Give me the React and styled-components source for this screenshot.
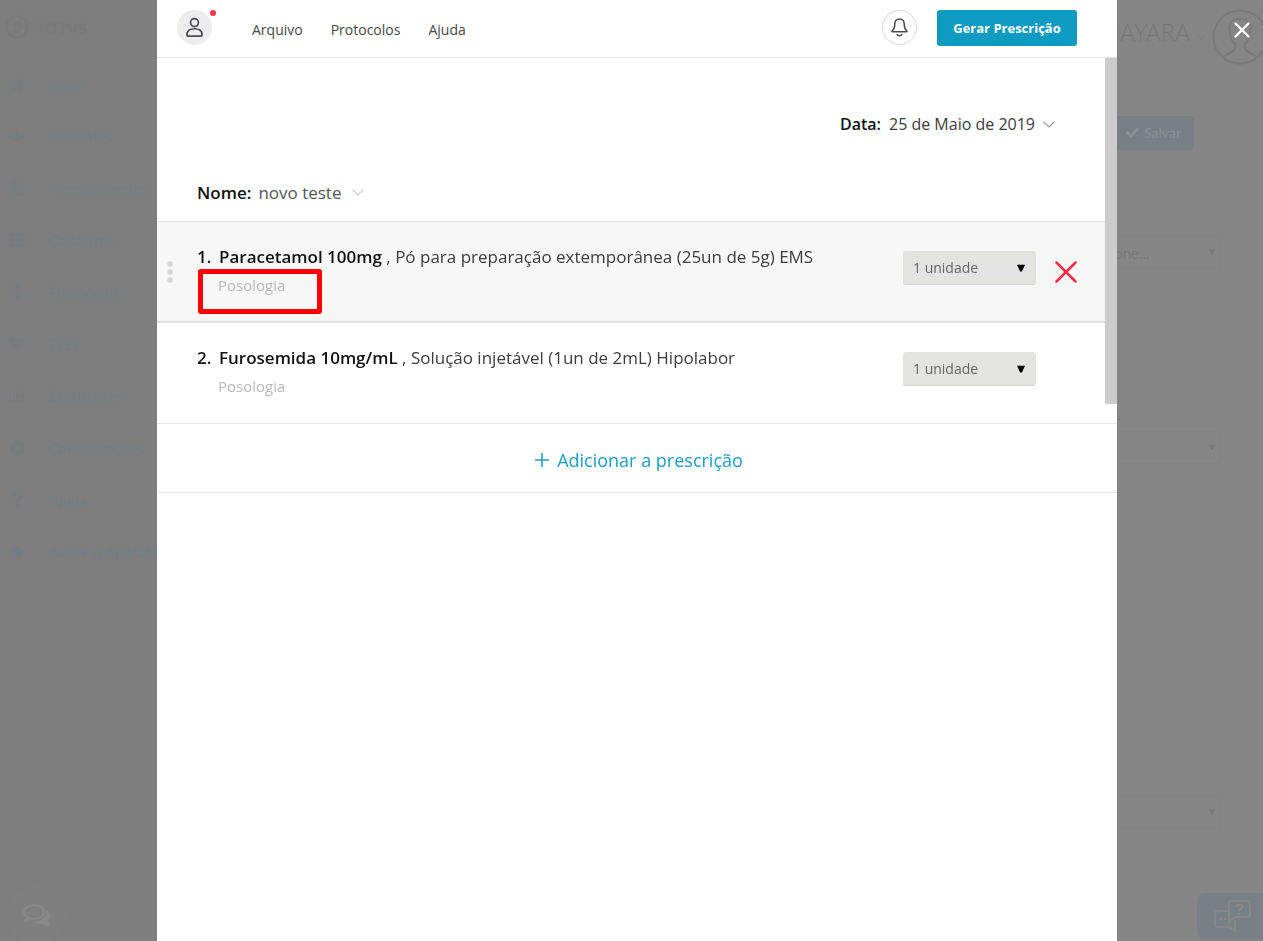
import React from "react";
import styled, { createGlobalStyle } from "styled-components";
import {
  FaHome,
  FaUsers,
  FaCalendarAlt,
  FaThList,
  FaDollarSign,
  FaHeartbeat,
  FaChartBar,
  FaCog,
  FaQuestion,
  FaStar,
  FaCheck,
} from "react-icons/fa";

const menu = [
  { label: "Início", icon: FaHome },
  { label: "Pacientes", icon: FaUsers },
  { label: "Agendamentos", icon: FaCalendarAlt },
  { label: "Cadastros", icon: FaThList },
  { label: "Financeiro", icon: FaDollarSign },
  { label: "TISS", icon: FaHeartbeat },
  { label: "Estatísticas", icon: FaChartBar },
  { label: "Configurações", icon: FaCog },
  { label: "Ajuda", icon: FaQuestion },
  { label: "Avalie o Aplicativo", icon: FaStar },
];

const items = [
  {
    name: "Paracetamol 100mg",
    details: "Pó para preparação extemporânea (25un de 5g) EMS",
    active: true,
  },
  {
    name: "Furosemida 10mg/mL",
    details: "Solução injetável (1un de 2mL) Hipolabor",
    active: false,
  },
];

function Chevron({ color, width = 12 }) {
  return (
    <svg width={width} height="7" viewBox="0 0 12 7" fill="none" aria-hidden="true">
      <path d="M0.7 0.8L6 6L11.3 0.8" stroke={color} strokeWidth="1.2" />
    </svg>
  );
}

function Caret({ color = "#000", size = 8 }) {
  return (
    <svg width={size} height={size} viewBox="0 0 9 9" aria-hidden="true">
      <path d="M0 0.8H9L5.5 8.5H3.5Z" fill={color} />
    </svg>
  );
}

function Backdrop() {
  return (
    <Page>
      <Sidebar>
        <Logo href="#">
          <svg width="24" height="24" viewBox="0 0 24 24" fill="none" aria-hidden="true">
            <circle cx="12" cy="12" r="10.5" stroke="#7b7b7b" strokeWidth="2.4" />
            <path d="M7 6l9-1 3 8-7 6-5-3 5-4z" fill="#7b7b7b" />
          </svg>
          TOTVS
        </Logo>
        {menu.map(({ label, icon: Icon }) => (
          <MenuLink href="#" key={label}>
            <Icon size={16} />
            {label}
          </MenuLink>
        ))}
      </Sidebar>
      <Main>
        <UserBar>
          <UserName>MAYARA</UserName>
          <Chevron color="#7a7a7a" width={8} />
          <svg width="56" height="56" viewBox="0 0 56 56" fill="none" stroke="#797979" strokeWidth="2" aria-hidden="true">
            <circle cx="28" cy="28" r="26.5" />
            <path d="M11 48c3-3 11-4 12-9v-4c-4-4-5-8-5-12-2-8 1-13 10-13s12 5 10 13c0 4-1 8-5 12v4c1 5 9 6 12 9" />
          </svg>
        </UserBar>
        <SaveButton>
          <FaCheck size={13} />
          Salvar
        </SaveButton>
        <Fields>
          <PageField>
            <PageSelect aria-label="Convênio">
              <option>Selecione...</option>
            </PageSelect>
            <Caret color="#777" size={6} />
          </PageField>
          <PageField $gap={162}>
            <PageSelect aria-label="Plano">
              <option></option>
            </PageSelect>
            <Caret color="#777" size={6} />
          </PageField>
          <PageField $gap={332}>
            <PageSelect aria-label="Situação">
              <option></option>
            </PageSelect>
            <Caret color="#777" size={6} />
          </PageField>
        </Fields>
      </Main>
      <ChatButton aria-label="Chat">
        <svg width="30" height="24" viewBox="0 0 30 24" aria-hidden="true">
          <ellipse cx="12" cy="9" rx="10" ry="7" fill="none" stroke="#888" strokeWidth="2.2" />
          <path d="M5 14L1 19c4 0 7-1 9-3z" fill="#888" />
          <path d="M24 6c6 4 6 9 2 12l2 5c-4 0-6-1-8-2-5 0-8-1-10-2 9 0 15-5 14-13z" fill="#888" />
        </svg>
      </ChatButton>
      <HelpButton aria-label="Suporte">
        <svg width="38" height="34" viewBox="0 0 38 34" fill="none" stroke="#878787" strokeWidth="2" aria-hidden="true">
          <path d="M15 12H4q-2 0-2 2v12q0 2 2 2h12l6 4V21" />
          <path d="M18 2h16q3 0 3 3v10q0 3-3 3H22l-6 5V4q0-2 2-2z" />
          <path d="M23.5 8q.5-2.500 3-2.500 3 0 3 2.500 0 1.500-3 3v1.500M26.500 14v2M7 20h2M11 20h2" />
        </svg>
      </HelpButton>
    </Page>
  );
}

function Prescription({ index, item }) {
  return (
    <Row $active={item.active}>
      <Handle>
        {item.active && (
          <svg width="6" height="22" viewBox="0 0 6 22" fill="#d6d6d6" aria-hidden="true">
            <circle cx="3" cy="3" r="2.7" />
            <circle cx="3" cy="11" r="2.7" />
            <circle cx="3" cy="19" r="2.7" />
          </svg>
        )}
      </Handle>
      <Description>
        <Medicine>
          <Strong>{index + 1}.</Strong>
          <span>
            <Strong>{item.name}</Strong> , {item.details}
          </span>
        </Medicine>
        <Dosage placeholder="Posologia" aria-label={`Posologia de ${item.name}`} />
        {item.active && <Highlight />}
      </Description>
      <Quantity>
        <QuantitySelect aria-label={`Quantidade de ${item.name}`}>
          <option>1 unidade</option>
        </QuantitySelect>
        <Caret />
      </Quantity>
      {item.active && (
        <RemoveButton aria-label="Remover">
          <svg width="22" height="22" viewBox="0 0 22 22" stroke="#ff2b44" strokeWidth="2.5" strokeLinecap="round" aria-hidden="true">
            <path d="M1.500 1.500L20.500 20.500M20.500 1.500L1.500 20.500" />
          </svg>
        </RemoveButton>
      )}
    </Row>
  );
}

export default function App() {
  return (
    <>
      <GlobalStyle />
      <Backdrop />
      <Overlay>
        <Modal role="dialog" aria-label="Prescrição">
          <Header>
            <Avatar aria-label="Perfil">
              <svg width="17" height="21" viewBox="0 0 18 21" fill="none" stroke="#4b4b55" strokeWidth="1.8" aria-hidden="true">
                <circle cx="9" cy="5.3" r="4.2" />
                <path d="M2.8 19.700C1.500 19.700 1 19 1 17.800 1.300 14 4.500 11.800 9 11.800s7.700 2.200 8 6c0 1.200-.5 1.900-1.800 1.900z" />
              </svg>
              <Dot />
            </Avatar>
            <Nav>
              <NavLink href="#">Arquivo</NavLink>
              <NavLink href="#">Protocolos</NavLink>
              <NavLink href="#">Ajuda</NavLink>
            </Nav>
            <BellButton aria-label="Notificações">
              <svg width="17" height="19" viewBox="0 0 17 19" fill="none" stroke="#4b4b55" strokeWidth="1.5" strokeLinejoin="round" aria-hidden="true">
                <path d="M1.600 13.800C.8 13.800.8 13 1.400 12.600 3 11.500 3.700 10 3.700 6.800 3.700 3 5.300 1 8.500 1s4.800 2 4.800 5.800c0 3.200.7 4.700 2.300 5.800.6.400.6 1.200-.2 1.200z" />
                <path d="M5.800 16c.6 1.200 1.500 1.800 2.700 1.800s2.100-.6 2.700-1.800" />
              </svg>
            </BellButton>
            <PrimaryButton>Gerar Prescrição</PrimaryButton>
          </Header>
          <ScrollArea>
            <Content>
              <Info>
                <DateField>
                  <Strong>Data:</Strong>
                  25 de Maio de 2019
                  <Chevron color="#999" />
                </DateField>
                <NameField>
                  <Strong>Nome:</Strong>
                  novo teste
                  <Chevron color="#ccc" />
                </NameField>
              </Info>
              <List>
                {items.map((item, index) => (
                  <Prescription key={item.name} index={index} item={item} />
                ))}
              </List>
            </Content>
            <ScrollThumb />
          </ScrollArea>
          <AddButton>
            <svg width="14" height="14" viewBox="0 0 14 14" stroke="#1a9fc4" strokeWidth="1.5" aria-hidden="true">
              <path d="M7 0V14M0 7H14" />
            </svg>
            Adicionar a prescrição
          </AddButton>
        </Modal>
        <CloseButton aria-label="Fechar">
          <svg width="16" height="16" viewBox="0 0 16 16" stroke="#fff" strokeWidth="2.4" strokeLinecap="round" aria-hidden="true">
            <path d="M1.500 1.500L14.500 14.500M14.500 1.500L1.500 14.500" />
          </svg>
        </CloseButton>
      </Overlay>
    </>
  );
}

const GlobalStyle = createGlobalStyle`
  * {
    box-sizing: border-box;
  }
  body {
    margin: 0;
    background: #858585;
    font-family: "Open Sans", sans-serif;
    color: #3c3c3c;
  }
  button, input, select {
    margin: 0;
    padding: 0;
    border: none;
    background: none;
    font: inherit;
    color: inherit;
  }
  button {
    cursor: pointer;
  }
  a {
    color: inherit;
    text-decoration: none;
  }
`;

const Page = styled.div`
  display: grid;
  grid-template-columns: 220px minmax(0, 1fr);
  height: 100vh;
  overflow: hidden;
  font-family: Lato, sans-serif;
`;

const Sidebar = styled.nav`
  background: #7e7e7e;
`;

const Logo = styled.a`
  display: flex;
  align-items: center;
  gap: 7px;
  height: 58px;
  padding: 0 0 4px 5px;
  color: #7b7b7b;
  font-size: 16px;
  font-weight: 700;
`;

const MenuLink = styled.a`
  display: flex;
  align-items: center;
  gap: 23px;
  height: 52px;
  padding-left: 9px;
  color: #767e82;
  font-size: 15px;
  font-weight: 700;
`;

const Main = styled.main`
  display: flex;
  flex-direction: column;
  align-items: flex-end;
  overflow: hidden;
`;

const UserBar = styled.header`
  display: flex;
  align-items: center;
  gap: 7px;
  height: 74px;
  margin-right: -5px;
`;

const UserName = styled.span`
  padding-bottom: 10px;
  color: #777;
  font-size: 23px;
  font-weight: 300;
`;

const SaveButton = styled.button`
  display: flex;
  align-items: center;
  gap: 5px;
  height: 34px;
  margin: 42px 69px 86px 0;
  padding: 0 13px 2px;
  border-radius: 4px;
  background: #768085;
  color: #8b8f91;
  font-size: 14px;
`;

const Fields = styled.div`
  padding-right: 42px;
`;

const PageField = styled.div`
  position: relative;
  margin-top: ${(props) => props.$gap || 0}px;

  svg {
    position: absolute;
    right: 6px;
    top: 13px;
  }
`;

const PageSelect = styled.select`
  display: block;
  width: 160px;
  height: 33px;
  padding-left: 14px;
  border: 1px solid #828282;
  border-radius: 4px;
  appearance: none;
  color: #797979;
  font-size: 15px;
`;

const ChatButton = styled.button`
  position: fixed;
  left: 7px;
  bottom: -4px;
  display: flex;
  align-items: center;
  justify-content: center;
  width: 60px;
  height: 60px;
  border-radius: 50%;
  background: #7f7f7f;
`;

const HelpButton = styled.button`
  position: fixed;
  right: -4px;
  bottom: 2px;
  display: flex;
  align-items: center;
  justify-content: center;
  width: 70px;
  height: 46px;
  border-radius: 8px;
  background: #768085;
`;

const Overlay = styled.div`
  position: fixed;
  inset: 0;
  display: grid;
  grid-template-columns: 157px minmax(0, 1fr) 146px;
`;

const Modal = styled.section`
  grid-column: 2;
  background: #fff;
`;

const CloseButton = styled.button`
  display: flex;
  place-self: start end;
  margin: 22px 13px;
`;

const Header = styled.header`
  display: flex;
  height: 58px;
  padding: 10px 40px 0 20px;
  border-bottom: 1px solid #e6e6e6;
`;

const Avatar = styled.button`
  position: relative;
  display: flex;
  align-items: center;
  justify-content: center;
  width: 35px;
  height: 35px;
  border-radius: 50%;
  background: #ededed;
`;

const Dot = styled.span`
  position: absolute;
  top: 0;
  right: -4px;
  width: 6px;
  height: 6px;
  border-radius: 50%;
  background: #ff3344;
`;

const Nav = styled.nav`
  display: flex;
  flex: 1;
  gap: 28px;
  padding-left: 40px;
`;

const NavLink = styled.a`
  color: #484848;
  font-size: 14px;
  line-height: 40px;
`;

const BellButton = styled.button`
  display: flex;
  align-items: center;
  justify-content: center;
  width: 35px;
  height: 35px;
  margin-right: 20px;
  border: 1px solid #d6d6d6;
  border-radius: 50%;
`;

const PrimaryButton = styled.button`
  width: 140px;
  height: 36px;
  border-radius: 3px;
  background: #0e9bc1;
  color: #fff;
  font-size: 13px;
  font-weight: 700;
`;

const ScrollArea = styled.div`
  display: flex;
  border-bottom: 1px solid #e6e6e6;
`;

const ScrollThumb = styled.div`
  width: 12px;
  margin-bottom: 19px;
  background: #ccc;
`;

const Content = styled.div`
  flex: 1;
  min-width: 0;
`;

const Info = styled.div`
  display: flex;
  flex-direction: column;
  gap: 44px;
  padding: 54px 50px 17px 40px;
`;

const Field = styled.button`
  display: flex;
  align-items: center;
  height: 24px;
  white-space: nowrap;
`;

const DateField = styled(Field)`
  align-self: flex-end;
  gap: 8px;
  font-size: 16px;
`;

const NameField = styled(Field)`
  align-self: flex-start;
  gap: 7px;
  color: #555;
  font-size: 17px;

  svg {
    margin-left: 4px;
  }
`;

const Strong = styled.strong`
  color: #111;
  font-weight: 600;
`;

const List = styled.ol`
  margin: 0;
  padding: 0;
  list-style: none;
`;

const Row = styled.li`
  display: grid;
  grid-template-columns: 40px minmax(0, 1fr) 133px 69px;
  height: 101px;
  border-top: 1px solid #e2e2e2;
  border-bottom: ${(props) => (props.$active ? "1px solid #e2e2e2" : "none")};
  background: ${(props) => (props.$active ? "#f7f7f7" : "#fff")};
`;

const Handle = styled.span`
  display: flex;
  align-items: center;
  padding-left: 10px;
`;

const Description = styled.div`
  position: relative;
  padding-top: 21px;
`;

const Medicine = styled.div`
  display: grid;
  grid-template-columns: 22px 1fr;
  font-size: 17px;
  line-height: 28px;
  white-space: nowrap;
`;

const Dosage = styled.input`
  display: block;
  width: 100%;
  height: 28px;
  padding-left: 21px;
  font-size: 15px;

  &::placeholder {
    color: #b8b8b8;
  }
`;

/* red frame drawn over the dosage field */
const Highlight = styled.span`
  position: absolute;
  top: 47px;
  left: 1px;
  width: 124px;
  height: 45px;
  border: 5px solid #ff0000;
  border-radius: 3px;
  pointer-events: none;
`;

const Quantity = styled.div`
  position: relative;
  padding-top: 29px;

  svg {
    position: absolute;
    top: 42px;
    right: 11px;
  }
`;

const QuantitySelect = styled.select`
  display: block;
  width: 100%;
  height: 34px;
  padding-left: 10px;
  border-bottom: 1px solid #d3d4cf;
  border-radius: 3px;
  appearance: none;
  background: #e3e4df;
  color: #666;
  font-size: 14px;
`;

const RemoveButton = styled.button`
  display: flex;
  place-self: center start;
  margin-left: 19px;
`;

const AddButton = styled.button`
  display: flex;
  align-items: center;
  justify-content: center;
  gap: 8px;
  width: 100%;
  height: 69px;
  padding: 4px 0 0 4px;
  border-bottom: 1px solid #e6e6e6;
  color: #1a9fc4;
  font-size: 18px;
`;
